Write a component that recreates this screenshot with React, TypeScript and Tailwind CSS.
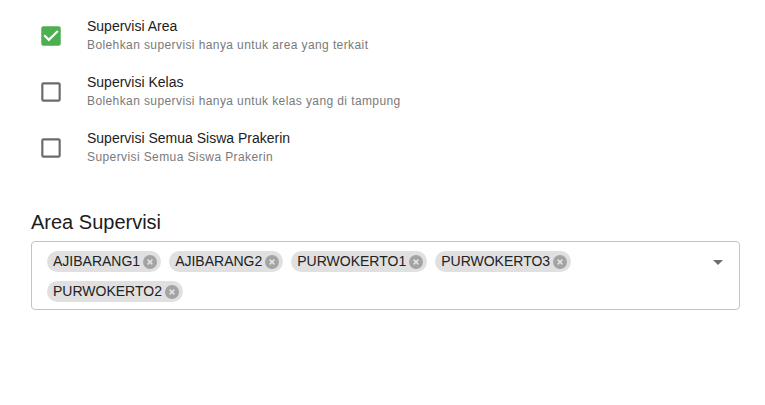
import React from "react";

const options = [
  {
    label: "Supervisi Area",
    hint: "Bolehkan supervisi hanya untuk area yang terkait",
    checked: true,
  },
  {
    label: "Supervisi Kelas",
    hint: "Bolehkan supervisi hanya untuk kelas yang di tampung",
    checked: false,
  },
  {
    label: "Supervisi Semua Siswa Prakerin",
    hint: "Supervisi Semua Siswa Prakerin",
    checked: false,
  },
];

const areas = ["AJIBARANG1", "AJIBARANG2", "PURWOKERTO1", "PURWOKERTO3", "PURWOKERTO2"];

function Box({ checked }: { checked: boolean }) {
  if (checked)
    return (
      <svg viewBox="0 0 24 24" className="block h-[26px] w-[26px]">
        <rect x="3" y="3" width="18" height="18" rx="2" fill="#4caf50" />
        <path d="M10 17l-5-5 1.41-1.41L10 14.17l7.59-7.59L19 8l-9 9z" fill="white" />
      </svg>
    );
  return (
    <svg viewBox="0 0 24 24" className="block h-[26px] w-[26px]">
      <path
        d="M19 5v14H5V5h14m0-2H5c-1.1 0-2 .9-2 2v14c0 1.1.9 2 2 2h14c1.1 0 2-.9 2-2V5c0-1.1-.9-2-2-2z"
        fill="#6b6b6b"
      />
    </svg>
  );
}

function Chip({ text }: { text: string }) {
  return (
    <span className="flex h-[21px] items-center rounded-full bg-[#e0e0e0] pl-[6px] pr-[3px] text-[14px] text-[#222]">
      {text}
      <svg viewBox="0 0 16 16" className="ml-[2px] h-[16px] w-[16px]">
        <circle cx="8" cy="8" r="7" fill="#a3a3a3" />
        <path d="M5.6 5.6l4.8 4.8M10.4 5.6l-4.8 4.8" stroke="#e0e0e0" strokeWidth="1.6" />
      </svg>
    </span>
  );
}

export default function App() {
  return (
    <div className="h-[405px] w-[765px] bg-white pl-[31px] pr-[25px] pt-[8px] font-['Liberation_Sans',Arial,sans-serif]">
      {options.map((o) => (
        <div key={o.label} className="flex h-[56px] items-center">
          <div className="w-[56px] pl-[7px]">
            <Box checked={o.checked} />
          </div>
          <div className="flex flex-col">
            <span className="text-[14px] leading-[19px] text-[#1c1c1c]">{o.label}</span>
            <span className="text-[12px] leading-[19px] tracking-[0.4px] text-[#7a7a7a]">{o.hint}</span>
          </div>
        </div>
      ))}

      <h2 className="mt-[34px] text-[20px] leading-[24px] text-[#1c1c1c]">Area Supervisi</h2>

      <div className="mt-[7px] flex h-[69px] items-start rounded-[4px] border border-[#c4c4c4] pl-[15px] pr-[16px] pt-[9px]">
        <div className="mr-[24px] flex flex-1 flex-wrap gap-x-[8px] gap-y-[9px]">
          {areas.map((a) => (
            <Chip key={a} text={a} />
          ))}
        </div>
        <svg viewBox="0 0 10 5" className="mt-[9px] h-[5px] w-[10px]">
          <path d="M0 0h10L5 5z" fill="#6f6f6f" />
        </svg>
      </div>
    </div>
  );
}
